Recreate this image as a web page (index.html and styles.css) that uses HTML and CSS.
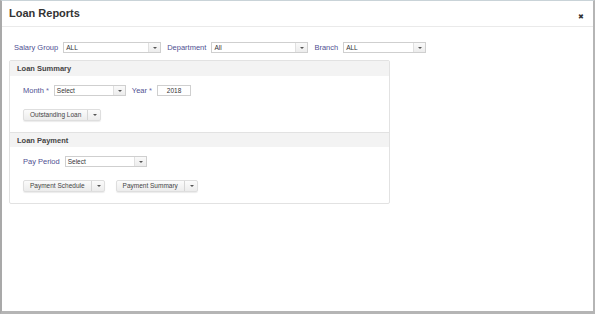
FILE: index.html
```html
<!DOCTYPE html>
<html lang="en">
  <head>
    <meta charset="UTF-8" />
    <title>Loan Reports</title>
    <link rel="stylesheet" href="styles.css">
  </head>
  <body>
    <div class="modal">
      <div class="modal-head">
        <h3>Loan Reports</h3>
        <span class="close">&#10006;</span>
      </div>
      <div class="modal-body">
        <div class="filters">
          <label>Salary Group</label>
          <div class="sel w98"><span>ALL</span><i></i></div>
          <label>Department</label>
          <div class="sel w97"><span>All</span><i></i></div>
          <label>Branch</label>
          <div class="sel w83"><span>ALL</span><i></i></div>
        </div>
        <div class="panel">
          <div class="panel-head">Loan Summary</div>
          <div class="panel-body">
            <div class="row">
              <label>Month <em>*</em></label>
              <div class="sel w72"><span>Select</span><i></i></div>
              <label>Year <em>*</em></label>
              <div class="txt">2018</div>
            </div>
            <div class="row btns">
              <div class="btn"><span>Outstanding Loan</span><i></i></div>
            </div>
          </div>
          <div class="panel-head sep">Loan Payment</div>
          <div class="panel-body">
            <div class="row">
              <label>Pay Period</label>
              <div class="sel w82"><span>Select</span><i></i></div>
            </div>
            <div class="row btns">
              <div class="btn"><span>Payment Schedule</span><i></i></div>
              <div class="btn"><span>Payment Summary</span><i></i></div>
            </div>
          </div>
        </div>
      </div>
    </div>
  </body>
</html>
```
FILE: styles.css
```css
* {
  padding: 0;
  margin: 0;
  box-sizing: border-box;
}
body {
  font-family: "Liberation Sans", Arial, sans-serif;
  background: #fff;
}
.modal {
  width: 595px;
  height: 314px;
  border-left: 2px solid #a9a9a9;
  border-right: 2px solid #b5b5b5;
  border-bottom: 3px solid #b5b5b5;
  border-top: 1px solid #c9d3d8;
  background: #fff;
}
.modal-head {
  height: 26px;
  display: flex;
  align-items: center;
  justify-content: space-between;
  padding: 0 9px 0 7px;
  border-bottom: 1px solid #eaeaea;
}
.modal-head h3 {
  font-size: 11px;
  font-weight: bold;
  color: #333;
  margin-top: -2px;
}
.close {
  font-size: 7px;
  color: #333;
  margin-top: 7px;
}
.modal-body {
  padding: 14px 0 0 7px;
}
.filters {
  display: flex;
  align-items: center;
  height: 12px;
}
label {
  font-size: 7.5px;
  color: #4f4f92;
  margin-right: 5px;
  white-space: nowrap;
}
label em {
  font-style: normal;
  color: #6a6aa8;
}
.filters label {
  margin-left: 6px;
}
.filters label:first-child {
  margin-left: 5px;
}
.sel {
  height: 11px;
  border: 1px solid #cfcfcf;
  display: flex;
  align-items: center;
  font-size: 6.5px;
  color: #333;
  background: #fff;
}
.sel span {
  flex: 1;
  padding-left: 2px;
}
.sel i {
  width: 12px;
  height: 100%;
  border-left: 1px solid #e0e0e0;
  background: linear-gradient(#fafafa, #ececec);
  position: relative;
}
.sel i::after,
.btn i::after {
  content: "";
  position: absolute;
  left: 4px;
  top: 4px;
  border-left: 2px solid transparent;
  border-right: 2px solid transparent;
  border-top: 2px solid #555;
}
.w98 { width: 98px; }
.w97 { width: 97px; }
.w83 { width: 83px; }
.w72 { width: 72px; }
.w82 { width: 82px; }
.panel {
  width: 381px;
  margin-top: 7px;
  border: 1px solid #e2e2e2;
  border-radius: 2px;
}
.panel-head {
  height: 15px;
  background: #f3f3f3;
  font-size: 7.5px;
  font-weight: bold;
  color: #444;
  padding-left: 7px;
  display: flex;
  align-items: center;
}
.panel-head.sep {
  border-top: 1px solid #e2e2e2;
}
.panel-body {
  padding: 8px 0 11px 13px;
}
.row {
  display: flex;
  align-items: center;
  height: 12px;
}
.row label {
  margin-right: 5px;
}
.row .sel + label {
  margin-left: 6px;
}
.txt {
  width: 34px;
  height: 11px;
  border: 1px solid #cfcfcf;
  font-size: 6.5px;
  color: #333;
  text-align: center;
  line-height: 9px;
}
.btns {
  margin-top: 13px;
  gap: 11px;
}
.btn {
  display: flex;
  height: 12px;
  font-size: 6.5px;
  color: #444;
  border: 1px solid #dedede;
  border-radius: 2px;
  background: linear-gradient(#fbfbfb, #ececec);
  box-shadow: 0 1px 1px rgba(0, 0, 0, 0.08);
}
.btn span {
  padding: 0 6px;
  line-height: 10px;
}
.btn i {
  width: 13px;
  border-left: 1px solid #d6d6d6;
  position: relative;
}
.btn i::after {
  left: 5px;
}
```
